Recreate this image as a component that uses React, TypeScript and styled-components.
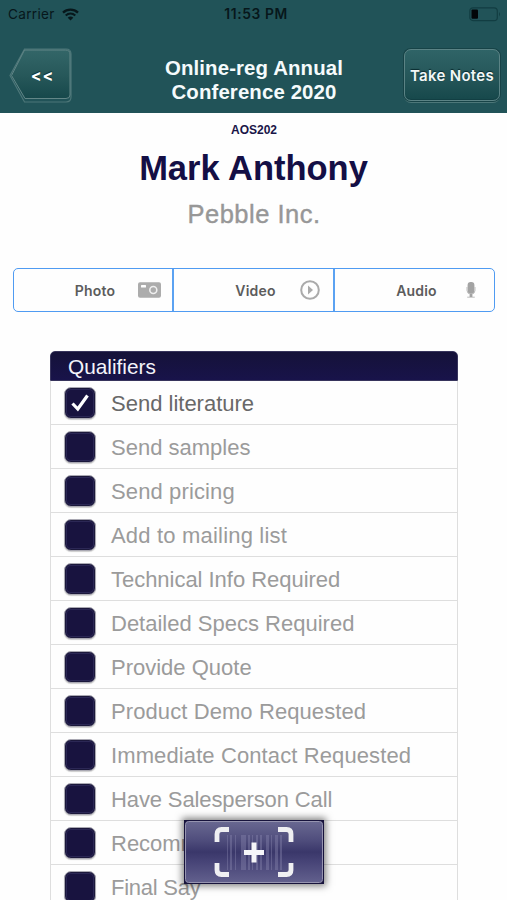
import React from 'react';
import styled, { createGlobalStyle } from 'styled-components';

const GlobalStyle = createGlobalStyle`
  * { box-sizing: border-box; }
  html, body { margin: 0; padding: 0; background: #fefefe; overflow: hidden; }
  button { margin: 0; padding: 0; border: 0; background: none; }
`;

const Screen = styled.main`
  position: relative;
  width: 507px;
  height: 900px;
  overflow: hidden;
  background: #fefefe;
  font-family: 'Liberation Sans', Arial, sans-serif;
`;

const Header = styled.header`
  height: 113px;
  background: #215358;
`;

const StatusBar = styled.div`
  height: 28px;
  padding: 0 6px 0 8px;
  display: grid;
  grid-template-columns: 1fr auto 1fr;
  align-items: center;
  color: #07171b;
  font-family: Inter, sans-serif;
`;

const Carrier = styled.div`
  display: flex;
  align-items: center;
  gap: 7px;
  font-size: 13.6px;
  letter-spacing: 0.3px;
`;

const Clock = styled.div`
  padding-left: 3px;
  font-size: 13.8px;
  font-weight: 600;
  letter-spacing: 0.6px;
`;

const BatterySvg = styled.svg`
  justify-self: end;
`;

const NavBar = styled.div`
  height: 85px;
  padding: 20px 6px 0 9px;
  display: grid;
  grid-template-columns: 63px 1fr 98px;
`;

const Title = styled.h1`
  margin: 8px 0 0;
  padding-left: 33px;
  text-align: center;
  color: #f5fbfc;
  font-size: 20.4px;
  line-height: 24px;
  font-weight: 700;
  letter-spacing: 0.12px;
  white-space: nowrap;
`;

const BackButton = styled.button`
  position: relative;
  width: 63px;
  height: 56px;
`;

const BackLabel = styled.span`
  position: absolute;
  inset: 0;
  padding: 0 0 2px 4px;
  display: flex;
  align-items: center;
  justify-content: center;
  color: #fff;
  font: 700 16px/1 Inter, sans-serif;
  letter-spacing: 0.8px;
  text-shadow: 0 -1px 1px #0a2c30;
`;

const NotesButton = styled.button`
  width: 96px;
  height: 52px;
  margin: 1px 0 0 1px;
  border: 1px solid #5b8385;
  border-radius: 7px;
  background: linear-gradient(#2f6467, #255659 55%, #16484b);
  box-shadow: 0 0 0 1px #174347, inset 0 -1px 0 #123f43, 0 2px 0 #4d7779;
  color: #f3f8f8;
  font: 600 15px/1 Inter, sans-serif;
  letter-spacing: 0.3px;
  white-space: nowrap;
  text-shadow: 0 -1px 1px #0a2c30;
`;

const Contact = styled.section`
  height: 155px;
  text-align: center;
  display: flex;
  flex-direction: column;
  align-items: center;
`;

const Code = styled.div`
  margin-top: 10px;
  padding-left: 1px;
  color: #191548;
  font-size: 12px;
  line-height: 14px;
  font-weight: 700;
`;

const Name = styled.h2`
  margin: 10px 0 0;
  color: #140f45;
  font-size: 34.5px;
  line-height: 42px;
  font-weight: 700;
`;

const Company = styled.div`
  margin-top: 10px;
  padding-left: 1px;
  color: #979797;
  font-size: 25.5px;
  line-height: 30px;
  letter-spacing: 0.5px;
  -webkit-text-stroke: 0.4px #979797;
`;

const MediaBar = styled.div`
  width: 482px;
  height: 44px;
  margin-left: 13px;
  display: grid;
  grid-template-columns: 158px 161px 1fr;
  border: 1.5px solid #4f9bf2;
  border-radius: 5px;
`;

const MediaButton = styled.button`
  display: grid;
  grid-template-columns: 1fr 46px;
  align-items: center;
  padding: 2px 0 0 50px;
  text-align: center;
  color: #5c5c5c;
  font: 600 14px/1 Inter, sans-serif;
  letter-spacing: 0.2px;
  & + & { border-left: 2px solid #5ba2f2; }
`;

const MediaIcon = styled.span`
  display: flex;
  justify-content: center;
  padding-bottom: 2px;
  svg { display: block; }
`;

const Qualifiers = styled.section`
  width: 408px;
  margin: 39px 0 0 50px;
`;

const ListHeading = styled.h3`
  margin: 0;
  height: 30px;
  padding-left: 17px;
  border: 1px solid #37345c;
  border-radius: 5px 5px 0 0;
  background: linear-gradient(#151239, #18134a);
  color: #f4f4fa;
  font-weight: 400;
  font-size: 20.8px;
  line-height: 29px;
`;

const List = styled.ul`
  margin: 0;
  padding: 0;
  list-style: none;
  border: solid #dedede;
  border-width: 0 1px;
`;

const Item = styled.li<{ $on?: boolean }>`
  height: 44px;
  padding: 1px 0 0 13px;
  display: flex;
  align-items: center;
  gap: 15px;
  border-bottom: 1px solid #dedede;
  color: ${p => (p.$on ? '#686868' : '#9b9b9b')};
  font-size: 22px;
  white-space: nowrap;
`;

const Box = styled.span`
  width: 32px;
  height: 32px;
  flex: none;
  display: flex;
  align-items: center;
  justify-content: center;
  border: 1px solid #aaa9b3;
  border-radius: 7px;
  background: #18133f;
  box-shadow: inset 0 0 0 1px #1b183b, inset 0 0 0 2px #2b2755, 0 1px 1px #ccc;
`;

const Label = styled.span<{ $track?: number }>`
  padding-top: 2px;
  letter-spacing: ${p => p.$track ?? 0}px;
`;

const ScanButton = styled.button`
  position: absolute;
  left: 184px;
  top: 820px;
  width: 140px;
  height: 64px;
  background: #17133c;
  box-shadow: 0 0 7px 2px rgba(0, 0, 0, 0.5);
  svg { display: block; }
`;

const Wifi = () => (
  <svg width="17" height="13" viewBox="0 0 17 13" fill="none" stroke="#07171b">
    <path d="M1 4.7C5.2.7 11.8.7 16 4.7" strokeWidth="2.3" />
    <path d="M3.7 7.5C6.5 5 10.5 5 13.3 7.5" strokeWidth="2.1" />
    <path d="M8.5 12.5L5.7 9.7C7.3 8.2 9.7 8.2 11.3 9.7Z" fill="#07171b" stroke="none" />
  </svg>
);

const Battery = () => (
  <BatterySvg width="32" height="15" viewBox="0 0 32 15">
    <rect x=".8" y=".8" width="27.5" height="12.8" rx="3.2" fill="none" stroke="#123d42" strokeWidth="1.2" />
    <rect x="2.5" y="2.6" width="6.5" height="9.2" rx="1" fill="#020608" />
    <path d="M30 5Q32 7.2 30 9.4Z" fill="#123d42" />
  </BatterySvg>
);

const BackShape = () => (
  <svg width="63" height="56" viewBox="0 0 63 56">
    <defs>
      <linearGradient id="back" x1="0" y1="0" x2="0" y2="1">
        <stop stopColor="#336668" /><stop offset=".55" stopColor="#265759" /><stop offset="1" stopColor="#16484b" />
      </linearGradient>
    </defs>
    <path d="M15.5 1H57Q62 1 62 6V49Q62 54 57 54H15.5L1 27.5Z" fill="none" stroke="#4d7779" strokeWidth="1.2" />
    <path d="M15.5 2H56.5Q61 2 61 6V47Q61 50.5 57 50.5H16L2.5 27.5Z" fill="url(#back)" stroke="#628687" />
  </svg>
);

const Camera = () => (
  <svg width="23" height="16" viewBox="0 0 23 16">
    <rect width="23" height="15.5" y=".2" rx="2" fill="#acacac" />
    <rect x="3" y="3" width="5" height="2.5" rx=".5" fill="#fff" />
    <circle cx="15.3" cy="8" r="3.5" fill="none" stroke="#efefef" strokeWidth="1.6" />
  </svg>
);

const Play = () => (
  <svg width="20" height="20" viewBox="0 0 20 20">
    <circle cx="10" cy="10" r="8.8" fill="none" stroke="#aaa" strokeWidth="2" />
    <path d="M8 5.5L13 10L8 14.5Z" fill="#aaa" />
  </svg>
);

const Mic = () => (
  <svg width="10" height="16" viewBox="0 0 10 16">
    <rect x="1.6" y="0" width="6.8" height="12" rx="3" fill="#a3a3a3" />
    <path d="M1 5V8.5Q1 12 5 12T9 8.5V5M1.2 15.2H8.8" fill="none" stroke="#bdbdbd" strokeWidth="1" />
    <path d="M5 12V15" stroke="#a3a3a3" strokeWidth="2.8" />
  </svg>
);

const bars = [
  [43, 1], [46, 2], [51, 1], [57, 5], [64, 2], [68, 1], [72, 2], [76, 2], [82, 3], [87, 1], [91, 3], [96, 2],
];

const ScanArt = () => (
  <svg width="140" height="64" viewBox="0 0 140 64">
    <defs>
      <linearGradient id="scan" x1="0" y1="0" x2="0" y2="1">
        <stop stopColor="#696891" /><stop offset=".3" stopColor="#504e7d" /><stop offset=".5" stopColor="#3a376a" />
        <stop offset=".65" stopColor="#464376" /><stop offset="1" stopColor="#62608d" />
      </linearGradient>
    </defs>
    <rect x="1.5" y="1.5" width="137" height="61" rx="3" fill="url(#scan)" stroke="#9694b0" />
    {bars.map(([x, w]) => (
      <rect key={x} x={x} y="15" width={w} height="35" fill="#8988b0" opacity=".4" />
    ))}
    <path
      d="M33 22V14Q33 9.5 37.5 9.5H45M94 9.5H102.5Q107 9.5 107 14V22M107 43V50Q107 54.5 102.5 54.5H94M45 54.5H37.5Q33 54.5 33 50V43"
      fill="none" stroke="#efeff2" strokeWidth="4.8"
    />
    <path d="M60 32.5H80M70 22.5V42.5" stroke="#f5f5f8" strokeWidth="5" />
  </svg>
);

const items: [string, number][] = [
  ['Send literature', 0], ['Send samples', 0], ['Send pricing', 0.12], ['Add to mailing list', 0.19],
  ['Technical Info Required', -0.03], ['Detailed Specs Required', 0], ['Provide Quote', 0],
  ['Product Demo Requested', 0.09], ['Immediate Contact Requested', 0.11], ['Have Salesperson Call', -0.12],
  ['Recommend', 0], ['Final Say', -0.25],
];

export default function App() {
  return (
    <Screen>
      <GlobalStyle />
      <Header>
        <StatusBar>
          <Carrier>Carrier <Wifi /></Carrier>
          <Clock>11:53 PM</Clock>
          <Battery />
        </StatusBar>
        <NavBar>
          <BackButton><BackShape /><BackLabel>&lt;&lt;</BackLabel></BackButton>
          <Title>Online-reg Annual<br />Conference 2020</Title>
          <NotesButton>Take Notes</NotesButton>
        </NavBar>
      </Header>
      <Contact>
        <Code>AOS202</Code>
        <Name>Mark Anthony</Name>
        <Company>Pebble Inc.</Company>
      </Contact>
      <MediaBar>
        <MediaButton>Photo<MediaIcon><Camera /></MediaIcon></MediaButton>
        <MediaButton>Video<MediaIcon><Play /></MediaIcon></MediaButton>
        <MediaButton>Audio<MediaIcon><Mic /></MediaIcon></MediaButton>
      </MediaBar>
      <Qualifiers>
        <ListHeading>Qualifiers</ListHeading>
        <List>
          {items.map(([text, track], i) => (
            <Item key={text} $on={i === 0}>
              <Box>
                {i === 0 && (
                  <svg width="20" height="20" viewBox="0 0 20 20">
                    <path d="M2.5 10.5L7.8 16L17.5 2.5" fill="none" stroke="#fff" strokeWidth="3.2" />
                  </svg>
                )}
              </Box>
              <Label $track={track}>{text}</Label>
            </Item>
          ))}
        </List>
      </Qualifiers>
      <ScanButton aria-label="Scan"><ScanArt /></ScanButton>
    </Screen>
  );
}
